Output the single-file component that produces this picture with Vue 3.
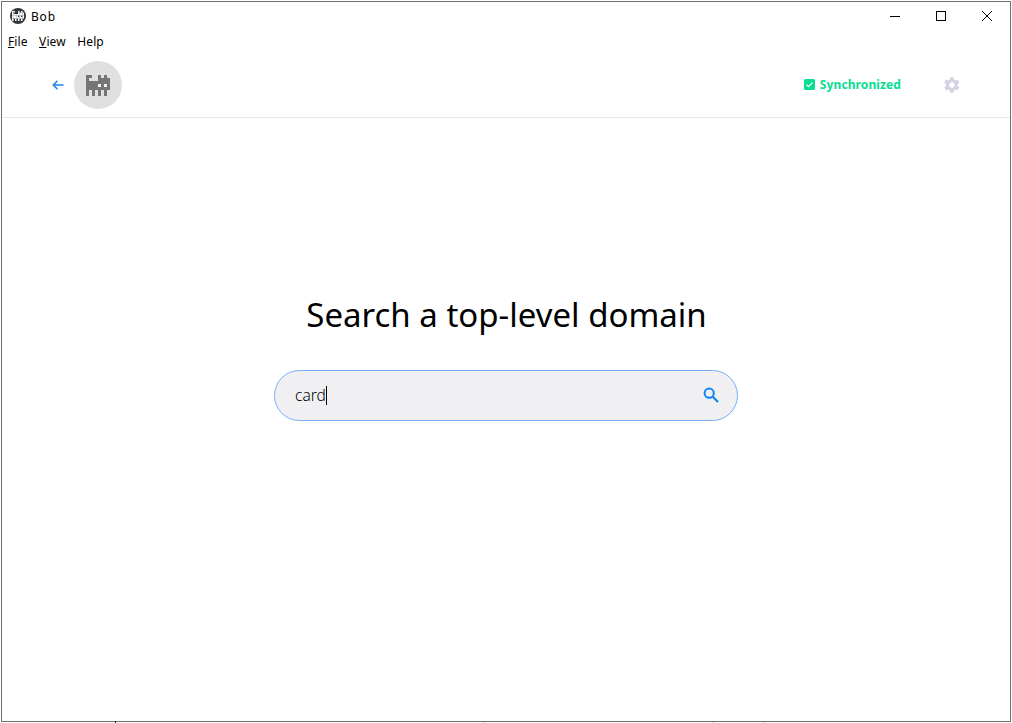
<script setup>
import { ref } from 'vue';

const query = ref('card');
const menus = [
  { label: 'File', key: 'F', rest: 'ile' },
  { label: 'View', key: 'V', rest: 'iew' },
  { label: 'Help', key: '', rest: 'Help' }
];

// cat pixels, one string per row of the 8x7 grid
const catRows = [
  'xx..x.x.',
  'x...xxxx',
  'xxxxxxxx',
  'xxxxoxox',
  'xxxxxxxx',
  'x.x.x.x.',
  'x.x.x.x.'
];
const catPixels = [];
catRows.forEach((row, y) => {
  row.split('').forEach((c, x) => {
    if (c === 'x') catPixels.push({ x, y });
  });
});

// stray marks under the window frame
const ticks = [
  { x: 115, top: 721, color: '#222' },
  { x: 484, top: 722, color: '#bbb' },
  { x: 713, top: 722, color: '#bbb' },
  { x: 763, top: 722, color: '#bbb' }
];
</script>

<template>
  <div class="page">
    <div class="window">
      <div class="titlebar">
        <div class="app-title">
          <span class="app-icon">
            <svg width="12" height="10.5" viewBox="0 0 8 7">
              <rect v-for="p in catPixels" :key="p.x + '-' + p.y" :x="p.x" :y="p.y" width="1.02" height="1.02" fill="#fff" />
            </svg>
          </span>
          <span>Bob</span>
        </div>
        <div class="win-buttons">
          <svg class="win-btn" width="46" height="28" viewBox="0 0 46 28" shape-rendering="crispEdges">
            <rect x="18" y="14" width="10" height="1" fill="#000" />
          </svg>
          <svg class="win-btn" width="46" height="28" viewBox="0 0 46 28" shape-rendering="crispEdges">
            <rect x="18.5" y="9.5" width="9" height="9" fill="none" stroke="#000" />
          </svg>
          <svg class="win-btn" width="46" height="28" viewBox="0 0 46 28">
            <path d="M18 9l10 10M28 9L18 19" stroke="#000" fill="none" />
          </svg>
        </div>
      </div>

      <div class="menubar">
        <span v-for="m in menus" :key="m.label" class="menu-item"><u v-if="m.key">{{ m.key }}</u>{{ m.rest }}</span>
      </div>

      <header class="topbar">
        <div class="nav">
          <svg class="back" width="12" height="12" viewBox="0 0 12 12">
            <path d="M11.5 6H1.5M5.5 1.8L1.3 6l4.2 4.2" fill="none" stroke="#1a85f0" stroke-width="1.5" />
          </svg>
          <div class="avatar">
            <svg width="24" height="21" viewBox="0 0 8 7" shape-rendering="crispEdges">
              <template v-for="(row, y) in catRows" :key="y">
                <rect v-for="(c, x) in row" v-show="c !== '.'" :key="x" :x="x" :y="y" width="1" height="1"
                      :fill="c === 'o' ? '#f0f0f0' : '#757575'" />
              </template>
            </svg>
          </div>
        </div>
        <div class="status">
          <span class="sync">
            <svg width="11" height="11" viewBox="0 0 11 11">
              <rect width="11" height="11" rx="1.5" fill="#05de90" />
              <path d="M2.5 5.7l2 2 4-4.2" fill="none" stroke="#fff" stroke-width="1.2" />
            </svg>
            Synchronized
          </span>
          <svg class="gear" width="18" height="18" viewBox="0 0 24 24">
            <path fill="#d3d3e4" d="M19.4 13c.04-.33.06-.66.06-1s-.02-.67-.07-1l2.17-1.7c.2-.15.25-.43.12-.65l-2.05-3.55c-.13-.22-.39-.3-.62-.22l-2.55 1.03a7.6 7.6 0 0 0-1.73-1l-.38-2.72A.5.5 0 0 0 13.85 1.8h-4.1c-.25 0-.46.18-.5.42l-.39 2.72c-.62.26-1.2.6-1.73 1L4.58 4.9c-.23-.09-.49 0-.62.22L1.91 8.65c-.13.22-.07.5.12.65L4.2 11c-.05.33-.08.67-.08 1s.03.67.07 1l-2.16 1.7c-.2.15-.25.43-.12.65l2.05 3.55c.13.22.39.3.62.22l2.55-1.03c.53.4 1.1.74 1.73 1l.39 2.72c.04.24.25.42.5.42h4.1c.25 0 .46-.18.5-.42l.38-2.72c.63-.26 1.2-.6 1.73-1l2.55 1.03c.23.09.49 0 .62-.22l2.05-3.55c.13-.22.08-.5-.12-.65L19.4 13zM11.8 15.6a3.6 3.6 0 1 1 0-7.2 3.6 3.6 0 0 1 0 7.2z" />
          </svg>
        </div>
      </header>

      <main class="content">
        <h1 class="heading">Search a top-level domain</h1>
        <div class="search">
          <span class="query">{{ query }}</span><span class="caret"></span>
          <svg class="search-icon" width="18" height="18" viewBox="0 0 18 18">
            <circle cx="7.2" cy="7.2" r="4.6" fill="none" stroke="#0d84f5" stroke-width="2" />
            <path d="M10.8 10.8L16 16" stroke="#0d84f5" stroke-width="2.2" />
          </svg>
        </div>
      </main>
    </div>
    <i v-for="t in ticks" :key="t.x" class="tick" :style="{ left: t.x + 'px', top: t.top + 'px', background: t.color }"></i>
  </div>
</template>

<style>
html, body {
  background: #fff;
}
</style>

<style scoped>
.page {
  position: relative;
  box-sizing: border-box;
  height: 723px;
  padding: 1px;
  overflow: hidden;
}

.tick {
  position: absolute;
  width: 1px;
  height: 2px;
}

.window {
  box-sizing: border-box;
  width: 1010px;
  height: 721px;
  border: 1px solid #707070;
  background: #fff;
  display: flex;
  flex-direction: column;
  font-family: "Noto Sans", "Open Sans", sans-serif;
  color: #000;
  overflow: hidden;
}

.titlebar {
  height: 28px;
  flex: none;
  display: flex;
  justify-content: space-between;
  align-items: center;
}

.app-title {
  display: flex;
  align-items: center;
  gap: 5px;
  padding-left: 8px;
  font-size: 12px;
  letter-spacing: 0.8px;
}

.app-icon {
  width: 16px;
  height: 16px;
  border-radius: 50%;
  background: #33363d;
  display: flex;
  align-items: center;
  justify-content: center;
}

.win-buttons {
  display: flex;
}

.win-btn {
  display: block;
}

.menubar {
  height: 22px;
  flex: none;
  display: flex;
  align-items: center;
  gap: 11.5px;
  padding-left: 6px;
  font-size: 12px;
  letter-spacing: 0.1px;
}

.topbar {
  flex: none;
  height: 66px;
  box-sizing: border-box;
  border-bottom: 1px solid #e8e8e8;
  display: flex;
  justify-content: space-between;
  align-items: flex-start;
  padding: 9px 49px 0 50px;
}

.nav {
  display: flex;
  align-items: center;
  gap: 10px;
}

.avatar {
  width: 48px;
  height: 48px;
  border-radius: 50%;
  background: #e0e0e0;
  display: flex;
  align-items: center;
  justify-content: center;
}

.status {
  display: flex;
  align-items: center;
  gap: 42px;
  height: 48px;
}

.sync {
  display: flex;
  align-items: center;
  gap: 5px;
  margin-bottom: 2px;
  font-size: 12px;
  font-weight: 700;
  letter-spacing: 0.1px;
  color: #05de90;
}

.content {
  flex: 1;
  display: flex;
  flex-direction: column;
  align-items: center;
  padding-top: 174px;
}

.heading {
  margin: 0;
  padding-left: 1px;
  font-size: 33px;
  font-weight: 400;
  line-height: 46px;
}

.search {
  position: relative;
  box-sizing: border-box;
  width: 464px;
  height: 51px;
  margin-top: 32px;
  padding-left: 20px;
  border: 1px solid #74b0fb;
  border-radius: 26px;
  background: #f0f0f3;
  display: flex;
  align-items: center;
  font-size: 15.5px;
  font-weight: 300;
}

.query {
  margin-bottom: 2px;
}

.caret {
  width: 1px;
  height: 19px;
  background: #000;
}

.search-icon {
  position: absolute;
  right: 17px;
  top: 15px;
}
</style>
